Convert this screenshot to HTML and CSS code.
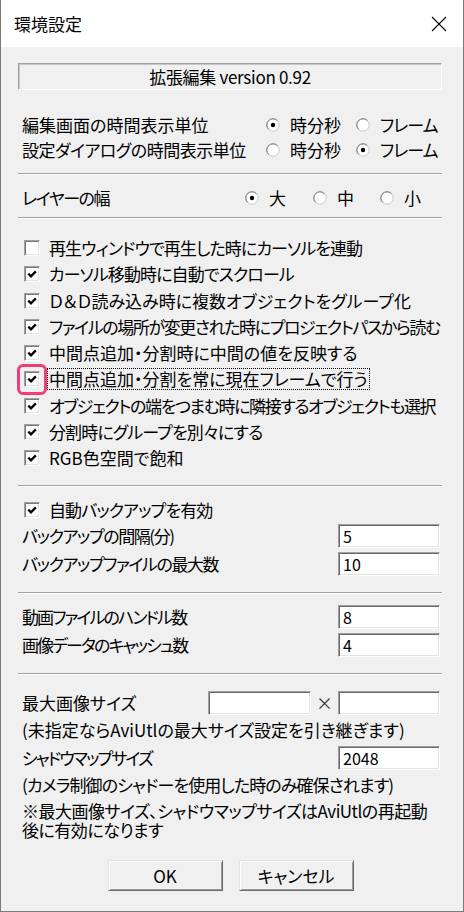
FILE: index.html
```html
<!DOCTYPE html>
<html lang="ja">
<head>
<meta charset="utf-8">
<title>環境設定</title>
<link rel="stylesheet" href="styles.css">
</head>
<body>
<div class="window">
  <div class="titlebar">
    <span class="title">環境設定</span>
    <svg class="close" width="16" height="16" viewBox="0 0 16 16"><path d="M1 1 L15 15 M15 1 L1 15" stroke="#000" stroke-width="1.1" fill="none"/></svg>
  </div>
  <div class="content">
    <div class="version">拡張編集 version 0.92</div>

    <div class="time-grid">
      <span class="lbl">編集画面の時間表示単位</span>
      <span class="opt"><svg class="radio" viewBox="0 0 14 14"><circle cx="7" cy="7" r="6.2" fill="#fff" stroke="#c8c8c8"/><path d="M2.6 11.4 A6.2 6.2 0 0 1 11.4 2.6" stroke="#7a7a7a" fill="none"/><circle cx="7" cy="7" r="2.2" fill="#000"/></svg>時分秒</span>
      <span class="opt t2"><svg class="radio" viewBox="0 0 14 14"><circle cx="7" cy="7" r="6.2" fill="#fff" stroke="#c8c8c8"/><path d="M2.6 11.4 A6.2 6.2 0 0 1 11.4 2.6" stroke="#7a7a7a" fill="none"/></svg>フレーム</span>
      <span class="lbl t1">設定ダイアログの時間表示単位</span>
      <span class="opt"><svg class="radio" viewBox="0 0 14 14"><circle cx="7" cy="7" r="6.2" fill="#fff" stroke="#c8c8c8"/><path d="M2.6 11.4 A6.2 6.2 0 0 1 11.4 2.6" stroke="#7a7a7a" fill="none"/></svg>時分秒</span>
      <span class="opt t2"><svg class="radio" viewBox="0 0 14 14"><circle cx="7" cy="7" r="6.2" fill="#fff" stroke="#c8c8c8"/><path d="M2.6 11.4 A6.2 6.2 0 0 1 11.4 2.6" stroke="#7a7a7a" fill="none"/><circle cx="7" cy="7" r="2.2" fill="#000"/></svg>フレーム</span>
    </div>

    <div class="sep s11"></div>

    <div class="layer-grid">
      <span class="lbl t3">レイヤーの幅</span>
      <span class="opt"><svg class="radio" viewBox="0 0 14 14"><circle cx="7" cy="7" r="6.2" fill="#fff" stroke="#c8c8c8"/><path d="M2.6 11.4 A6.2 6.2 0 0 1 11.4 2.6" stroke="#7a7a7a" fill="none"/><circle cx="7" cy="7" r="2.2" fill="#000"/></svg>大</span>
      <span class="opt"><svg class="radio" viewBox="0 0 14 14"><circle cx="7" cy="7" r="6.2" fill="#fff" stroke="#c8c8c8"/><path d="M2.6 11.4 A6.2 6.2 0 0 1 11.4 2.6" stroke="#7a7a7a" fill="none"/></svg>中</span>
      <span class="opt"><svg class="radio" viewBox="0 0 14 14"><circle cx="7" cy="7" r="6.2" fill="#fff" stroke="#c8c8c8"/><path d="M2.6 11.4 A6.2 6.2 0 0 1 11.4 2.6" stroke="#7a7a7a" fill="none"/></svg>小</span>
    </div>

    <div class="sep s7"></div>

    <div class="checks">
      <div class="check"><span class="cb"></span><span class="t2">再生ウィンドウで再生した時にカーソルを連動</span></div>
      <div class="check"><span class="cb"><svg viewBox="0 0 10 10"><path d="M1.3 4.6 L4 7.3 L8.8 2.4" stroke="#000" stroke-width="2.3" fill="none"/></svg></span><span class="t2">カーソル移動時に自動でスクロール</span></div>
      <div class="check"><span class="cb"><svg viewBox="0 0 10 10"><path d="M1.3 4.6 L4 7.3 L8.8 2.4" stroke="#000" stroke-width="2.3" fill="none"/></svg></span><span>Ｄ＆Ｄ読み込み時に複数オブジェクトをグループ化</span></div>
      <div class="check"><span class="cb"><svg viewBox="0 0 10 10"><path d="M1.3 4.6 L4 7.3 L8.8 2.4" stroke="#000" stroke-width="2.3" fill="none"/></svg></span><span class="t3">ファイルの場所が変更された時にプロジェクトパスから読む</span></div>
      <div class="check"><span class="cb"><svg viewBox="0 0 10 10"><path d="M1.3 4.6 L4 7.3 L8.8 2.4" stroke="#000" stroke-width="2.3" fill="none"/></svg></span><span>中間点追加・分割時に中間の値を反映する</span></div>
      <div class="check focused"><span class="highlight"></span><span class="cb"><svg viewBox="0 0 10 10"><path d="M1.3 4.6 L4 7.3 L8.8 2.4" stroke="#000" stroke-width="2.3" fill="none"/></svg></span><span class="focus">中間点追加・分割を常に現在フレームで行う</span></div>
      <div class="check"><span class="cb"><svg viewBox="0 0 10 10"><path d="M1.3 4.6 L4 7.3 L8.8 2.4" stroke="#000" stroke-width="2.3" fill="none"/></svg></span><span class="t3">オブジェクトの端をつまむ時に隣接するオブジェクトも選択</span></div>
      <div class="check"><span class="cb"><svg viewBox="0 0 10 10"><path d="M1.3 4.6 L4 7.3 L8.8 2.4" stroke="#000" stroke-width="2.3" fill="none"/></svg></span><span class="t2">分割時にグループを別々にする</span></div>
      <div class="check"><span class="cb"><svg viewBox="0 0 10 10"><path d="M1.3 4.6 L4 7.3 L8.8 2.4" stroke="#000" stroke-width="2.3" fill="none"/></svg></span><span>RGB色空間で飽和</span></div>
    </div>

    <div class="sep s14"></div>

    <div class="check backup"><span class="cb"><svg viewBox="0 0 10 10"><path d="M1.3 4.6 L4 7.3 L8.8 2.4" stroke="#000" stroke-width="2.3" fill="none"/></svg></span><span class="t2">自動バックアップを有効</span></div>
    <div class="field first"><span class="t3">バックアップの間隔(分)</span><input class="box" value="5"></div>
    <div class="field"><span class="t3">バックアップファイルの最大数</span><input class="box" value="10"></div>

    <div class="sep s16"></div>

    <div class="field top11"><span class="t4">動画ファイルのハンドル数</span><input class="box" value="8"></div>
    <div class="field"><span class="t4">画像データのキャッシュ数</span><input class="box" value="4"></div>

    <div class="sep s16"></div>

    <div class="field top16"><span>最大画像サイズ</span><span class="size-pair"><input class="box wide" value=""><span class="times">×</span><input class="box" value=""></span></div>
    <p class="note n1">(未指定ならAviUtlの最大サイズ設定を引き継ぎます)</p>
    <div class="field top6"><span class="t4">シャドウマップサイズ</span><input class="box" value="2048"></div>
    <p class="note n1 t2">(カメラ制御のシャドーを使用した時のみ確保されます)</p>
    <div class="note-block t1">
      <p class="note-line">※最大画像サイズ、シャドウマップサイズはAviUtlの再起動</p>
      <p class="note-line">後に有効になります</p>
    </div>

    <div class="buttons">
      <button class="btn">OK</button>
      <button class="btn">キャンセル</button>
    </div>
  </div>
</div>
</body>
</html>
```
FILE: styles.css
```css
html, body {
  margin: 0;
  padding: 0;
  background: #f0f0f0;
}

.window {
  width: 464px;
  height: 912px;
  box-sizing: border-box;
  border: 1px solid #7a7a7a;
  border-top: none;
  background: #f0f0f0;
  font-family: "Noto Sans CJK JP", sans-serif;
  font-size: 17px;
  font-feature-settings: "palt";
  color: #000;
  display: flex;
  flex-direction: column;
}

.titlebar {
  height: 47px;
  flex: none;
  background: #fff;
  display: flex;
  align-items: center;
  justify-content: space-between;
  padding: 0 16px 0 13px;
}

.title {
  font-size: 17px;
  line-height: 20px;
  font-feature-settings: normal;
}

.close {
  width: 16px;
  height: 16px;
  display: block;
}

.content {
  padding: 16px 21px 0 17px;
  display: flex;
  flex-direction: column;
}

.t1 { letter-spacing: -0.5px; }
.t2 { letter-spacing: -0.9px; }
.t3 { letter-spacing: -1.4px; }
.t4 { letter-spacing: -1.9px; }

.version {
  height: 27px;
  box-sizing: border-box;
  border: 1px solid;
  border-color: #a0a0a0 #fff #fff #a0a0a0;
  box-shadow: inset 1px 1px 0 #c8c8c8;
  display: flex;
  align-items: center;
  justify-content: center;
  line-height: 20px;
  letter-spacing: -0.3px;
}

.time-grid {
  margin-top: 22px;
  display: grid;
  grid-template-columns: 244px 90px auto;
  grid-auto-rows: 25px;
  padding-left: 4px;
  align-items: center;
  line-height: 20px;
}

.layer-grid {
  margin-top: 10px;
  height: 25px;
  display: grid;
  grid-template-columns: 223px 68px 67px auto;
  padding-left: 4px;
  align-items: center;
  line-height: 20px;
}

.opt {
  display: flex;
  align-items: center;
  white-space: nowrap;
}

.radio {
  width: 14px;
  height: 14px;
  flex: none;
  margin-right: 10px;
}

.sep {
  height: 0;
  border-top: 1px solid #a0a0a0;
  border-bottom: 1px solid #fff;
}
.s11 { margin-top: 11px; }
.s7 { margin-top: 7px; }
.s14 { margin-top: 14px; }
.s16 { margin-top: 16px; }

.checks {
  margin-top: 16px;
  display: flex;
  flex-direction: column;
}

.check {
  height: 26.25px;
  display: flex;
  align-items: center;
  padding-left: 6px;
  line-height: 20px;
  white-space: nowrap;
  position: relative;
}

.check.backup {
  margin-top: 10px;
  height: 26px;
}

.cb {
  width: 16px;
  height: 16px;
  flex: none;
  box-sizing: border-box;
  border: 1px solid;
  border-color: #a0a0a0 #fff #fff #a0a0a0;
  box-shadow: inset 1px 1px 0 #7a7a7a, inset -1px -1px 0 #e3e3e3;
  background: #fff;
  margin-right: 9px;
  display: flex;
  align-items: center;
  justify-content: center;
}

.cb svg {
  width: 10px;
  height: 10px;
  display: block;
}

.focus {
  outline: 1px dotted #000;
  outline-offset: 0;
  padding: 0 1px;
  margin-left: -1px;
}

.highlight {
  position: absolute;
  left: -1px;
  top: -2px;
  width: 30px;
  height: 31px;
  box-sizing: border-box;
  border: 3px solid #ee3f7c;
  border-radius: 6px;
}

.field {
  height: 24px;
  display: flex;
  align-items: center;
  justify-content: space-between;
  padding: 0 2px 0 4px;
  margin-top: 4px;
  line-height: 20px;
  white-space: nowrap;
}
.field.first { margin-top: 1px; }
.field.top11 { margin-top: 11px; }
.field.top16 { margin-top: 16px; }
.field.top6 { margin-top: 6px; }

.box {
  width: 102px;
  height: 24px;
  box-sizing: border-box;
  margin: 0;
  border: 1px solid;
  border-color: #a0a0a0 #fff #fff #a0a0a0;
  box-shadow: inset 1px 1px 0 #696969, inset -1px -1px 0 #e3e3e3;
  background: #fff;
  font-family: "Noto Sans CJK JP", sans-serif;
  font-size: 16px;
  padding: 0 0 0 4px;
  color: #000;
  outline: none;
}

.box.wide {
  width: 103px;
}

.size-pair {
  display: flex;
  align-items: center;
}

.times {
  width: 27px;
  text-align: center;
  color: #333;
}

.note {
  margin: 5px 0 0;
  padding-left: 4px;
  line-height: 20px;
  white-space: nowrap;
}

.note-block {
  margin-top: 7px;
  padding-left: 4px;
  display: flex;
  flex-direction: column;
}

.note-line {
  margin: 0;
  height: 18.5px;
  line-height: 18.5px;
  white-space: nowrap;
}

.buttons {
  margin-top: 21px;
  display: flex;
  justify-content: center;
  gap: 16px;
  padding-left: 1px;
}

.btn {
  width: 115px;
  height: 31px;
  box-sizing: border-box;
  margin: 0;
  border: 1px solid;
  border-color: #e3e3e3 #696969 #696969 #e3e3e3;
  box-shadow: inset 1px 1px 0 #fff, inset -1px -1px 0 #a0a0a0;
  background: #f0f0f0;
  font-family: "Noto Sans CJK JP", sans-serif;
  font-size: 17px;
  font-feature-settings: "palt";
  color: #000;
  padding: 0;
  line-height: 20px;
}
```
